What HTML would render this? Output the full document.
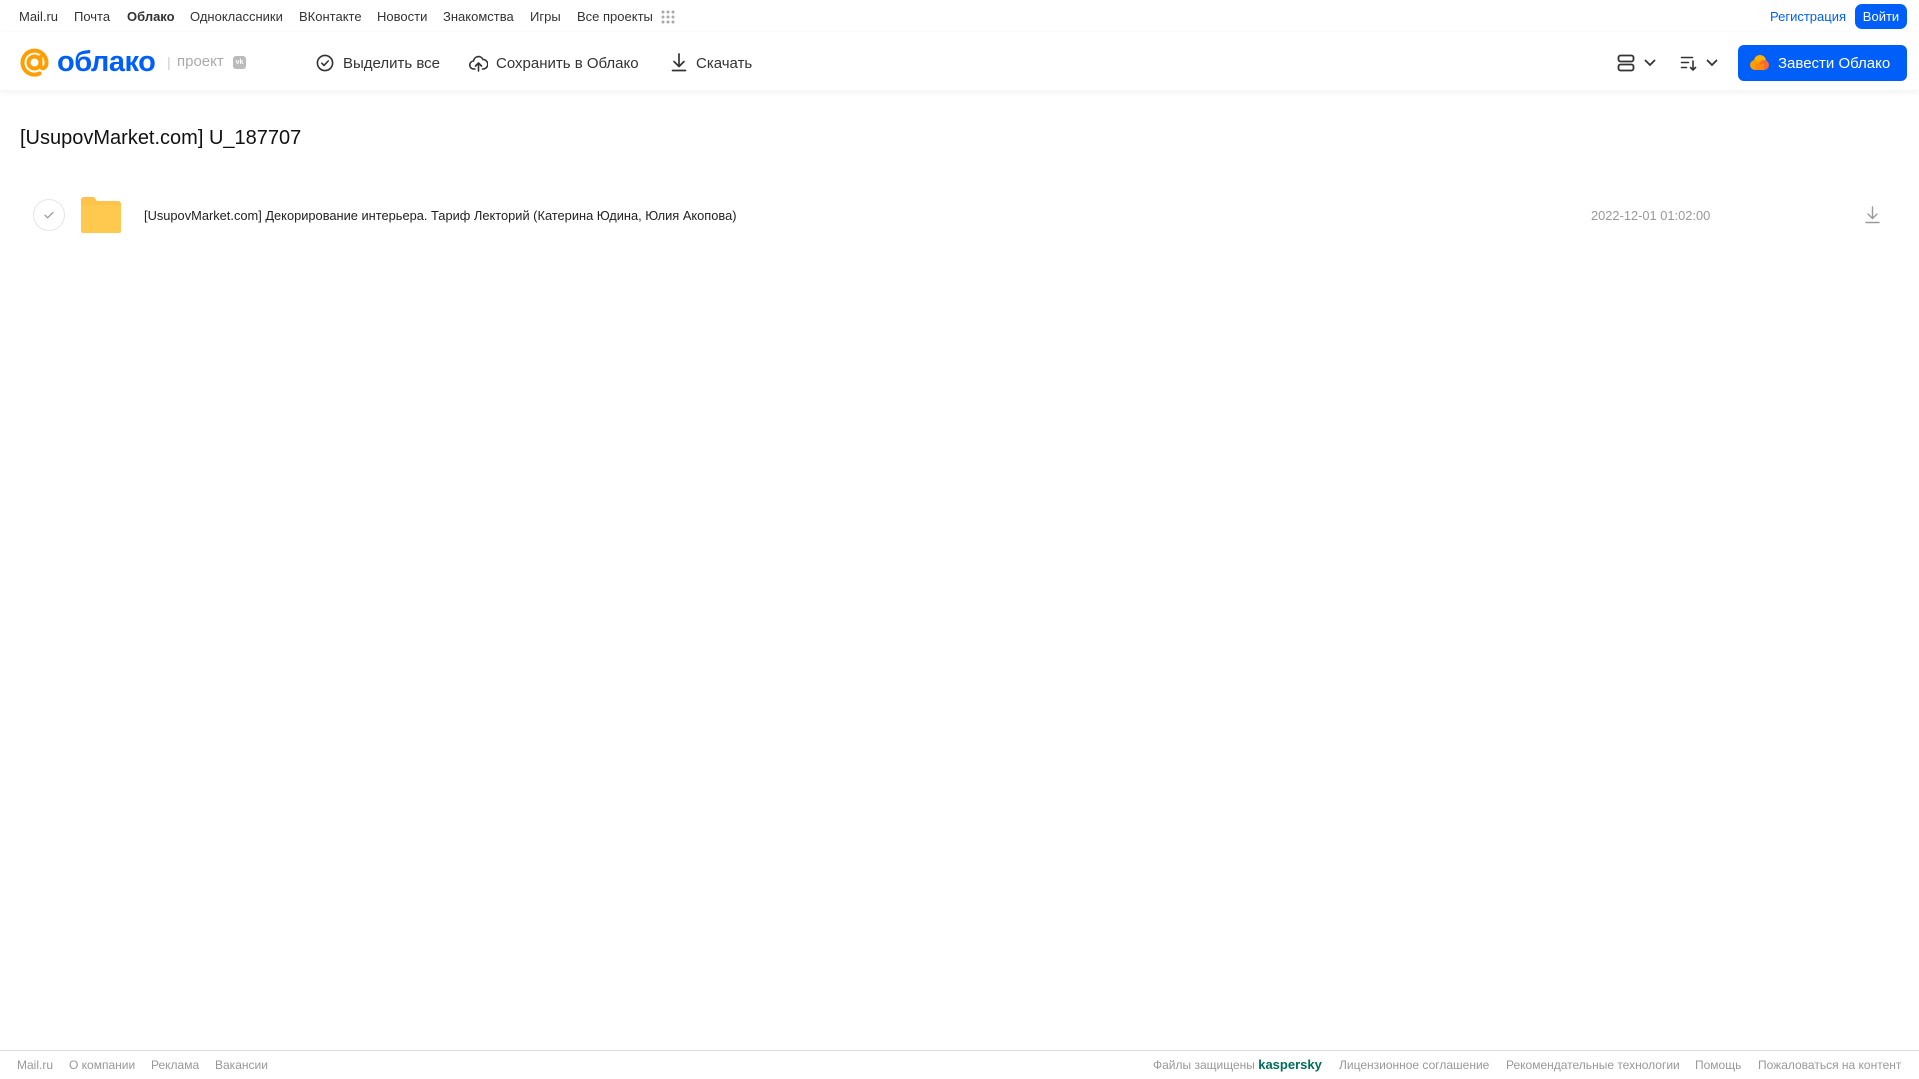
<!DOCTYPE html>
<html><head><meta charset="utf-8"><style>
*{margin:0;padding:0;box-sizing:border-box}
body{width:1919px;height:1079px;background:#fff;font-family:"Liberation Sans",Arial,sans-serif;position:relative;overflow:hidden;color:#333}
.a{position:absolute;white-space:nowrap}
.tn{font-size:13px;color:#333;top:9px;line-height:16px}
.hdr{position:absolute;left:0;top:32px;width:1919px;height:58px;background:#fff;box-shadow:0 2px 6px rgba(0,0,0,.06)}
.tb{font-size:15px;color:#333;top:55px;line-height:18px}
.ft{font-size:12px;color:#999;top:1058px;line-height:14px}
</style></head><body>
<div class="hdr"></div>
<span class="a tn" style="left:19px">Mail.ru</span>
<span class="a tn" style="left:74px">Почта</span>
<span class="a tn" style="left:127px;font-weight:bold">Облако</span>
<span class="a tn" style="left:190px">Одноклассники</span>
<span class="a tn" style="left:299px">ВКонтакте</span>
<span class="a tn" style="left:377px">Новости</span>
<span class="a tn" style="left:443px">Знакомства</span>
<span class="a tn" style="left:530px">Игры</span>
<span class="a tn" style="left:577px">Все проекты</span>
<svg class="a" style="left:661px;top:10px" width="14" height="14" viewBox="0 0 14 14" fill="#aaa"><circle cx="2" cy="2" r="1.5"/><circle cx="7" cy="2" r="1.5"/><circle cx="12" cy="2" r="1.5"/><circle cx="2" cy="7" r="1.5"/><circle cx="7" cy="7" r="1.5"/><circle cx="12" cy="7" r="1.5"/><circle cx="2" cy="12" r="1.5"/><circle cx="7" cy="12" r="1.5"/><circle cx="12" cy="12" r="1.5"/></svg>
<span class="a tn" style="left:1770px;color:#005ff9">Регистрация</span>
<div class="a" style="left:1855px;top:4px;width:52px;height:25px;background:#005ff9;border-radius:7px;color:#fff;font-size:13px;line-height:25px;text-align:center">Войти</div>

<svg class="a" style="left:18px;top:46px" width="33" height="33" viewBox="0 0 33 33"><circle cx="16.5" cy="16.5" r="6" fill="none" stroke="#ff9e00" stroke-width="4"/><path d="M22.5 11v8.5c0 4 6 4 6-3A12 12 0 1 0 21.5 27.5" fill="none" stroke="#ff9e00" stroke-width="4" stroke-linecap="round"/></svg>
<span class="a" style="left:57px;top:45px;font-size:29px;font-weight:bold;color:#005ff9;line-height:34px;letter-spacing:-0.5px">облако</span>
<span class="a" style="left:167px;top:54px;font-size:14px;color:#ccc">|</span>
<span class="a" style="left:177px;top:53px;font-size:15px;color:#aaa;line-height:18px">проект</span>
<div class="a" style="left:233px;top:56px;width:13px;height:13px;background:#bbb;border-radius:3px;color:#fff;font-size:7px;font-weight:bold;line-height:13px;text-align:center">vk</div>

<svg class="a" style="left:316px;top:54px" width="18" height="18" viewBox="0 0 18 18" fill="none" stroke="#333" stroke-width="1.6"><circle cx="9" cy="9" r="7.6"/><path d="M5.8 9.2l2.2 2.2 4.2-4.4" stroke-linecap="round" stroke-linejoin="round"/></svg>
<span class="a tb" style="left:343px">Выделить все</span>
<svg class="a" style="left:469px;top:54px" width="19" height="18" viewBox="0 0 19 18" fill="none" stroke="#333" stroke-width="1.6" stroke-linecap="round" stroke-linejoin="round"><path d="M6 15H5a4 4 0 0 1-.5-8A5 5 0 0 1 14 5.5a4.5 4.5 0 0 1 0 9.5h-.5"/><path d="M9.5 17V9M6.5 12l3-3 3 3"/></svg>
<span class="a tb" style="left:496px">Сохранить в Облако</span>
<svg class="a" style="left:671px;top:53px" width="16" height="19" viewBox="0 0 16 19" fill="none" stroke="#333" stroke-width="1.7" stroke-linecap="round" stroke-linejoin="round"><path d="M8 1v12M3 8.5l5 5 5-5M1.5 17.5h13"/></svg>
<span class="a tb" style="left:696px">Скачать</span>

<svg class="a" style="left:1617px;top:54px" width="18" height="18" viewBox="0 0 18 18" fill="none" stroke="#333" stroke-width="1.8"><rect x="1.5" y="1.5" width="15" height="6" rx="2"/><rect x="1.5" y="10.5" width="15" height="6" rx="2"/></svg>
<svg class="a" style="left:1644px;top:59px" width="12" height="8" viewBox="0 0 12 8" fill="none" stroke="#333" stroke-width="1.8" stroke-linecap="round"><path d="M1.5 1.5l4.5 4.5 4.5-4.5"/></svg>
<svg class="a" style="left:1680px;top:54px" width="18" height="18" viewBox="0 0 18 18" fill="none" stroke="#333" stroke-width="1.6" stroke-linecap="round"><path d="M1.5 3.5h11M1.5 8.5h7M1.5 13.5h5M13 7v9M10.5 13.5l2.5 2.5 2.5-2.5"/></svg>
<svg class="a" style="left:1706px;top:59px" width="12" height="8" viewBox="0 0 12 8" fill="none" stroke="#333" stroke-width="1.8" stroke-linecap="round"><path d="M1.5 1.5l4.5 4.5 4.5-4.5"/></svg>
<div class="a" style="left:1738px;top:45px;width:169px;height:36px;background:#005ff9;border-radius:6px"></div>
<svg class="a" style="left:1750px;top:54px" width="20" height="17" viewBox="0 0 20 17"><circle cx="10" cy="7" r="6" fill="#ffb200"/><circle cx="5" cy="11" r="5" fill="#ff9e00"/><circle cx="14" cy="11" r="5" fill="#ff6a2a"/><rect x="5" y="10" width="9" height="6" fill="#ff8a10"/></svg>
<span class="a" style="left:1778px;top:55px;font-size:15px;color:#fff;line-height:18px">Завести Облако</span>

<span class="a" style="left:20px;top:126px;font-size:20px;color:#111;line-height:24px">[UsupovMarket.com] U_187707</span>

<div class="a" style="left:33px;top:199px;width:32px;height:32px;border:1px solid #e6e6e6;border-radius:50%"></div>
<svg class="a" style="left:43px;top:210px" width="12" height="10" viewBox="0 0 12 10" fill="none" stroke="#999" stroke-width="1.3" stroke-linecap="round" stroke-linejoin="round"><path d="M2 5.2l2.6 2.6L10 2.4"/></svg>
<svg class="a" style="left:81px;top:197px" width="40" height="36" viewBox="0 0 40 36"><path d="M0 3a3 3 0 0 1 3-3h10l3 4h21a3 3 0 0 1 3 3v26a3 3 0 0 1-3 3H3a3 3 0 0 1-3-3z" fill="#ffc24a"/><rect x="0" y="8" width="40" height="28" rx="2" fill="#ffc94f"/></svg>
<span class="a" style="left:144px;top:208px;font-size:12.85px;color:#222;line-height:16px">[UsupovMarket.com] Декорирование интерьера. Тариф Лекторий (Катерина Юдина, Юлия Акопова)</span>
<span class="a" style="left:1591px;top:208px;font-size:12.85px;color:#999;line-height:16px">2022-12-01 01:02:00</span>
<svg class="a" style="left:1865px;top:206px" width="15" height="18" viewBox="0 0 15 18" fill="none" stroke="#999" stroke-width="1.4" stroke-linecap="round"><path d="M7.5 1v11M3 8l4.5 4.5L12 8M1 16.5h13"/></svg>

<div class="a" style="left:0;top:1050px;width:1919px;height:1px;background:#ddd"></div>
<span class="a ft" style="left:17px">Mail.ru</span>
<span class="a ft" style="left:69px">О компании</span>
<span class="a ft" style="left:151px">Реклама</span>
<span class="a ft" style="left:215px">Вакансии</span>
<span class="a ft" style="left:1153px">Файлы защищены <b style="color:#006d5c;font-size:13px">kaspersky</b></span>
<span class="a ft" style="left:1339px">Лицензионное соглашение</span>
<span class="a ft" style="left:1506px">Рекомендательные технологии</span>
<span class="a ft" style="left:1695px">Помощь</span>
<span class="a ft" style="left:1758px">Пожаловаться на контент</span>
</body></html>
